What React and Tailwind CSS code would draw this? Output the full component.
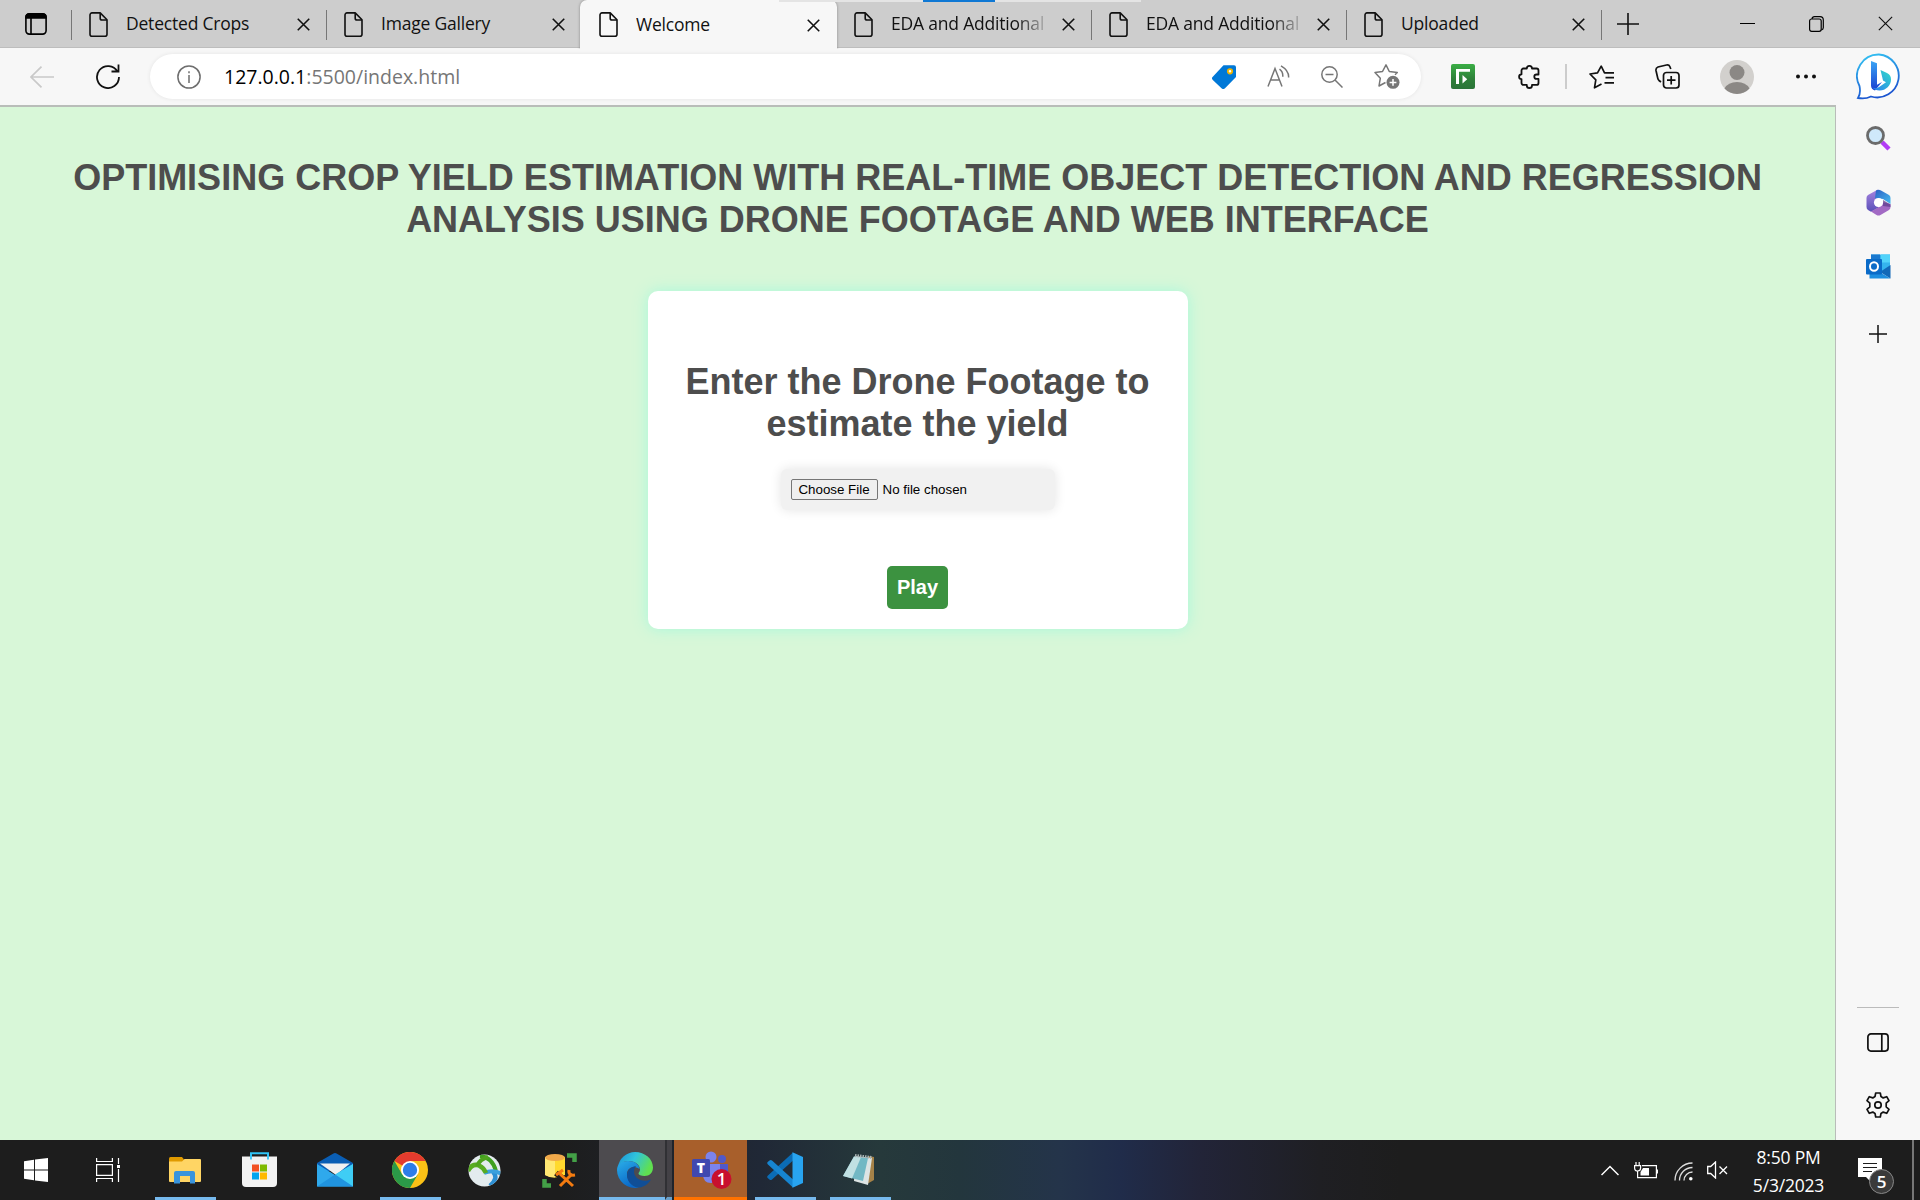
const FileIcon = () => (
  <svg className="w-[19px] h-[25px] shrink-0" viewBox="0 0 19 25" fill="none" stroke="#111" strokeWidth="1.6" strokeLinejoin="round">
    <path d="M3 .9h8.2L18 7.8v14.4a2 2 0 0 1-2 2H3a2 2 0 0 1-2-2V2.900a2 2 0 0 1 2-2z" />
    <path d="M11.200 1v5.200a1.800 1.800 0 0 0 1.800 1.800h5" />
  </svg>
);

const Cross = ({ className = "", w = 1.7 }) => (
  <svg className={className} viewBox="0 0 14 14" stroke="#111" strokeWidth={w} fill="none">
    <path d="M.8.8l12.400 12.400M13.200.8L.8 13.200" />
  </svg>
);

const Tab = ({ title, active, sep, fade }) => (
  <div className={active
    ? "relative w-[257px] -ml-px -mr-px h-[49px] bg-[#f7f7f7] rounded-t-[7px] flex items-center pl-[19px] shadow-[0_0_3px_rgba(0,0,0,.35)] [clip-path:inset(0_-4px_0_-4px)]"
    : "relative w-[255px] h-[48px] flex items-center pl-[18px]"}>
    <FileIcon />
    <span className={"ml-[18px] -mt-[2px] w-[156px] overflow-hidden whitespace-nowrap text-[17.500px] leading-[24px] tracking-[-0.2px] text-[#111] " + (fade ? "[mask-image:linear-gradient(to_right,black_125px,transparent_160px)]" : "")}>{title}</span>
    <Cross className="w-[13px] h-[13px] ml-[15px] mt-[1px]" />
    {sep && <i className="absolute right-[-1px] top-[10px] w-[1.500px] h-[30px] bg-[#777]" />}
  </div>
);

const TabBar = () => (
  <div className="relative h-[48px] bg-[#cdcdcd] flex shadow-[inset_0_-1px_0_#bdbdbd]">
    <div className="w-[71px] h-[48px] relative flex items-center pl-[25px]">
      <svg className="w-[22px] h-[22px]" viewBox="0 0 22 22" fill="none" stroke="#000" strokeWidth="1.6">
        <rect x=".9" y=".9" width="20.200" height="20.200" rx="3.500" />
        <path d="M1 3.500a2.500 2.500 0 0 1 2.500-2.500h15A2.500 2.500 0 0 1 21 3.500V5H1z" fill="#000" />
        <path d="M6 5v16" />
      </svg>
      <i className="absolute right-[-1px] top-[10px] w-[1.500px] h-[30px] bg-[#777]" />
    </div>
    <Tab title="Detected Crops" sep />
    <Tab title="Image Gallery" />
    <Tab title="Welcome" active />
    <Tab title="EDA and Additional" sep fade />
    <Tab title="EDA and Additional" sep fade />
    <Tab title="Uploaded" sep />
    <div className="flex-1 h-[47px] flex items-center pl-[16px]">
      <svg className="w-[22px] h-[22px]" viewBox="0 0 22 22" stroke="#111" strokeWidth="1.6"><path d="M11 0v22M0 11h22" /></svg>
      <i className="ml-[101px] w-[15px] h-[1.500px] bg-black" />
      <svg className="ml-[54px] w-[15px] h-[16px]" viewBox="0 0 15 16" fill="none" stroke="#000" strokeWidth="1.200">
        <rect x=".6" y="3" width="11.600" height="12.300" rx="2" />
        <path d="M3 2.800Q3.300.7 5.500.7H11q3.300 0 3.300 3.300v7.500q0 2-1.800 2.300" />
      </svg>
      <Cross className="ml-[54px] w-[15px] h-[15px]" w={1.1} />
    </div>
    <div className="absolute left-[779px] top-0 w-[362px] h-[2px] bg-[#e4e4e4]"><i className="block ml-[144px] w-[72px] h-[2px] bg-[#0f78d4]" /></div>
  </div>
);

const Bing = () => (
  <svg className="w-[46px] h-[48px]" viewBox="0 0 46 48">
    <defs>
      <linearGradient id="bo" x1="0" y1="0" x2="0.300" y2="1"><stop stopColor="#35c8f4" /><stop offset="1" stopColor="#1b55d0" /></linearGradient>
      <linearGradient id="b1" x1="0" y1="0" x2="0" y2="1"><stop stopColor="#3aa5f5" /><stop offset="1" stopColor="#1a3fd0" /></linearGradient>
      <linearGradient id="b2" x1="0" y1="1" x2="1" y2="0"><stop stopColor="#2a7cf0" /><stop offset="1" stopColor="#30dcc8" /></linearGradient>
    </defs>
    <path d="M23 1.500A21.500 21.500 0 1 1 15 43.500C11 45.500 6 45.800 2 45c2-3 2.500-7 1.500-12A21.500 21.500 0 0 1 23 1.500z" fill="#fff" stroke="url(#bo)" strokeWidth="1.800" />
    <path d="M15 8l6 2.200v21.500L26 29l-7 8.500c-2.500-.5-4-2.500-4-5z" fill="url(#b1)" />
    <path d="M24.500 17l6.500 3c3 1.500 4 3.500 4 6.500 0 6-5 11-11.500 11-3 0-5.500-1-7-3 3 1.500 5 .5 7-.8l6.500-4.500-3-1.800z" fill="url(#b2)" />
  </svg>
);

const Toolbar = () => (
  <div className="h-[57px] bg-[#f7f7f7] flex items-center">
    <svg className="ml-[30px] w-[24px] h-[22px]" viewBox="0 0 24 22" fill="none" stroke="#c9c9c9" strokeWidth="1.700"><path d="M24 11H1M11.500.7L1 11l10.500 10.300" /></svg>
    <svg className="ml-[42px] w-[24px] h-[25px]" viewBox="0 0 24 25" fill="none" stroke="#111" strokeWidth="1.800"><path d="M21.500 7.500A11 11 0 1 0 23 13M22.500.5v7h-7" /></svg>
    <div className="ml-[30px] w-[1271px] h-[45px] rounded-full bg-white flex items-center shadow-[0_0_4px_rgba(0,0,0,.08)]">
      <svg className="ml-[27px] w-[24px] h-[24px]" viewBox="0 0 24 24" fill="none" stroke="#6e6e6e" strokeWidth="1.500"><circle cx="12" cy="12" r="11.100" /><path d="M12 10v8M12 6.200v2" /></svg>
      <div className="ml-[23px] w-[988px] text-[19.500px] leading-[28px] text-[#767676] whitespace-nowrap"><span className="text-black">127.0.0.1</span>:5500/index.html</div>
      <svg className="w-[24px] h-[24px]" viewBox="0 0 24 24"><path d="M11.500.3H22a2 2 0 0 1 2 2V12L13 23.200a2.500 2.500 0 0 1-3.500 0L.8 15a2.200 2.200 0 0 1 0-3.200z" fill="#0078d7" /><circle cx="18" cy="6.300" r="2.200" fill="#fff" stroke="#f0b400" strokeWidth="1.800" /></svg>
      <svg className="ml-[31px] w-[23px] h-[23px]" viewBox="0 0 23 23" fill="none" stroke="#767676" strokeWidth="1.500"><path d="M1 21.500L8 3.500 15 21.500M3.700 15h8.600M12.500 4.200q3.600 2.500 3.300 7.500M14 .8q8 4.600 7.600 11.700" /></svg>
      <svg className="ml-[31px] w-[22px] h-[22px]" viewBox="0 0 22 22" fill="none" stroke="#767676" strokeWidth="1.500"><circle cx="8.500" cy="8.500" r="7.700" /><path d="M14 14l7.500 7.500M4.500 8.500h8" /></svg>
      <svg className="ml-[31px] w-[27px] h-[27px]" viewBox="0 0 27 27" fill="none" stroke="#767676" strokeWidth="1.500" strokeLinejoin="round"><path d="M11.500 19.500L5 23l1.300-7.700L1 9.500l7.500-1L12 1.800l3.300 6.700 8 1-2.300 2.200" /><circle cx="19" cy="19.300" r="6.500" fill="#767676" stroke="none" /><path d="M19 16v6.800M15.600 19.400h6.800" stroke="#fff" /></svg>
    </div>
    <svg className="ml-[30px] w-[24px] h-[25px]" viewBox="0 0 24 25"><defs><linearGradient id="fg" x1="0" y1="0" x2="0" y2="1"><stop stopColor="#3aae45" /><stop offset=".6" stopColor="#2e8039" /><stop offset="1" stopColor="#2b7438" /></linearGradient></defs><rect width="24" height="25" rx="2" fill="url(#fg)" /><path d="M5 5h14v2.700H8V20H5z" fill="#fff" /><path d="M11.500 11l4.700 4.200-4.700 4.300z" fill="#fff" /></svg>
    <svg className="ml-[42px] w-[24px] h-[25px]" viewBox="0 0 24 25" fill="none" stroke="#111" strokeWidth="1.800" strokeLinejoin="round"><path d="M6 4.500h3.800a2.600 2.600 0 1 1 5.200 0h4.500A2 2 0 0 1 21.500 6.500v4h-2a2.200 2.200 0 1 0 0 4.400h2v4a2 2 0 0 1-2 2H15v.5a2.600 2.600 0 1 1-5.200 0v-.5H6.500a2 2 0 0 1-2-2v-3.800a2.400 2.400 0 1 1 0-4.800V6.500a2 2 0 0 1 2-2z" /></svg>
    <i className="ml-[24px] w-[1.500px] h-[25px] bg-[#ccc]" />
    <svg className="ml-[22px] w-[26px] h-[24px]" viewBox="0 0 26 24" fill="none" stroke="#111" strokeWidth="1.700" strokeLinejoin="round"><path d="M12.500 19L5.500 22.800 6.800 14.800 1 9l7.500-1.100L12.200 1.200l3.300 6.600H25M16.500 12.700H25M15.500 17.800H25" /></svg>
    <svg className="ml-[40px] w-[25px] h-[25px]" viewBox="0 0 25 25" fill="none" stroke="#111" strokeWidth="1.700"><rect x="8.500" y="8.500" width="15.500" height="15.500" rx="3" /><path d="M16.200 12v8.500M12 16.200h8.500M6 18L4 16.500Q3 15.500 2.700 14L1 6.500Q.6 4 3 3L11.500 1q2.500-.5 3.300 1.500L15.800 5" /></svg>
    <svg className="ml-[40px] w-[34px] h-[34px]" viewBox="0 0 34 34"><circle cx="17" cy="17" r="17" fill="#d2d0cd" /><circle cx="17" cy="12.500" r="7.500" fill="#8b8885" /><path d="M4.500 28.500Q8 22 17 22t12.500 6.500A17 17 0 0 1 4.500 28.500z" fill="#8b8885" /></svg>
    <svg className="ml-[41px] w-[22px] h-[5px]" viewBox="0 0 22 5" fill="#111"><circle cx="3" cy="2.500" r="2" /><circle cx="11" cy="2.500" r="2" /><circle cx="19" cy="2.500" r="2" /></svg>
    <div className="ml-[39px]"><Bing /></div>
  </div>
);

const Sidebar = () => (
  <aside className="w-[84px] h-[1035px] bg-[#f7f7f7] flex flex-col items-center">
    <svg className="mt-[21px] w-[25px] h-[25px]" viewBox="0 0 25 25"><path d="M16 16l7 7" stroke="#b23cf5" strokeWidth="4.500" /><circle cx="9.500" cy="9.500" r="8" fill="#cfe9fb" stroke="#6b6b6b" strokeWidth="2.800" /></svg>
    <svg className="mt-[38px] w-[25px] h-[27px]" viewBox="0 0 25 27"><defs><linearGradient id="ma" x1="0" y1="0" x2="0" y2="1"><stop stopColor="#a684e0" /><stop offset="1" stopColor="#5a4fb8" /></linearGradient><linearGradient id="mb" x1="0" y1="0" x2="1" y2="1"><stop stopColor="#2b5fc4" /><stop offset="1" stopColor="#46bdf0" /></linearGradient></defs>
      <path d="M12 .5L2 6Q.5 7 .5 9v9q0 2 1.500 3l3 1.700 7.500-4V5z" fill="url(#ma)" /><path d="M10 1.500q2.500-1.500 5 0L23 6q1.500 1 1.500 3v6l-7.500-5-8-1z" fill="url(#mb)" /><path d="M24.500 15v3q0 2-1.500 3l-8.500 5q-2 1-4 0L5 22.500l8-4.500 4-5z" fill="#a26ac4" /><path d="M17 11l7.500 4.500V18L17 17z" fill="#5d3c8c" opacity=".7" /><circle cx="12.500" cy="13.500" r="4.600" fill="#fff" /></svg>
    <svg className="mt-[38px] w-[25px] h-[25px]" viewBox="0 0 25 25"><path d="M5 .5h19v17H5z" fill="#35b4ee" /><path d="M5 .5h9v8H5z" fill="#1a79cf" /><path d="M15 .5h9v8h-9z" fill="#52d3fa" /><path d="M3.500 12l21 12.500h-21z" fill="#1d8ee0" /><path d="M24.500 11v13.500L14 18z" fill="#1268b8" /><rect y="5" width="16" height="15.500" rx="1" fill="#0a6bc8" /><ellipse cx="8" cy="12.500" rx="4" ry="4.300" fill="none" stroke="#fff" strokeWidth="2" /></svg>
    <svg className="mt-[46px] w-[18px] h-[18px]" viewBox="0 0 18 18" stroke="#111" strokeWidth="1.500"><path d="M9 0v18M0 9h18" /></svg>
    <i className="mt-auto w-[42px] h-px bg-[#bbb]" />
    <svg className="mt-[25px] w-[22px] h-[19px]" viewBox="0 0 22 19" fill="none" stroke="#111" strokeWidth="1.700"><rect x=".9" y=".9" width="20.200" height="17.200" rx="3" /><path d="M14.800 1v17" /></svg>
    <svg className="mt-[40px] mb-[22px] w-[26px] h-[26px]" viewBox="0 0 26 26" fill="none" stroke="#111" strokeWidth="1.700" strokeLinejoin="round"><path d="M10.700 1h4.600l.7 3.600 2.200 1.300 3.500-1.200 2.300 4-2.800 2.400v3.800l2.800 2.400-2.300 4-3.500-1.200-2.200 1.300-.7 3.600h-4.600l-.7-3.600-2.200-1.300-3.500 1.200-2.300-4 2.800-2.400v-3.800L2 8.700l2.300-4 3.500 1.200L10 4.600z" /><circle cx="13" cy="13" r="3.200" /></svg>
  </aside>
);

const Page = () => (
  <main className="w-[1836px] h-[1035px] bg-[#d8f7d8] border-t-2 border-r border-[#b9bdb9] font-['Liberation_Sans',Arial,sans-serif] flex flex-col items-center">
    <h1 className="mt-[50px] w-[1760px] text-center text-[36px] leading-[42px] font-bold text-[#4d4d4d]">
      OPTIMISING CROP YIELD ESTIMATION WITH REAL-TIME OBJECT DETECTION AND REGRESSION<br />ANALYSIS USING DRONE FOOTAGE AND WEB INTERFACE
    </h1>
    <section className="mt-[50px] w-[540px] h-[338px] rounded-[10px] bg-white shadow-[0_0_15px_#a8f8dc] flex flex-col items-center">
      <h2 className="mt-[70px] text-center text-[36px] leading-[42px] font-bold text-[#4d4d4d]">Enter the Drone Footage to<br />estimate the yield</h2>
      <div className="mt-[24px] w-[274px] h-[41px] rounded-[6px] bg-[#f1f1f1] shadow-[0_0_12px_rgba(0,0,0,.11)] flex items-center pl-[10px] text-[13.333px] text-black">
        <button className="w-[87px] h-[21px] border border-[#767676] rounded-[2px] bg-[#efefef] leading-[18px] whitespace-nowrap">Choose File</button>
        <span className="ml-[5px]">No file chosen</span>
      </div>
      <button className="mt-[56px] w-[61px] h-[43px] rounded-[5px] bg-[#3c9240] text-white font-bold text-[20px] pb-[2px]">Play</button>
    </section>
  </main>
);

const Task = ({ className, children }) => <div className={"h-[60px] flex items-center justify-center border-b-[3px] pt-[3px] " + className}>{children}</div>;

const Taskbar = () => (
  <footer className="h-[60px] flex bg-[#1d1d1d] bg-[linear-gradient(to_right,#1d1d1d_560px,#202836_760px,#26393b_880px,#23363d_960px,#24344a_1060px,#202c4a_1120px,#222438_1200px,#1f1f23_1320px,#1d1d1d_1400px)] font-['Open_Sans','Noto_Sans',sans-serif]">
    <Task className="w-[72px] border-transparent"><svg className="w-[24px] h-[24px]" viewBox="0 0 24 24" fill="#fff"><path d="M0 3.300l10-1.500v9.700H0zM11 1.600L24 0v11.500H11zM0 12.500h10v9.700L0 20.700zM11 12.500h13V24l-13-1.600z" /></svg></Task>
    <Task className="w-[72px] border-transparent"><svg className="w-[24px] h-[24px]" viewBox="0 0 24 24" fill="none" stroke="#fff" strokeWidth="1.200"><path d="M.6 6.600h15.800v10.800H.6zM.6 0v3.500h15.800V0M.6 24v-3.500h15.800V24M22.500 0v6M22.500 11v13" /><path d="M21 7h3v3h-3z" fill="#fff" stroke="none" /></svg></Task>
    <Task className="w-[61px] ml-[11px] border-[#76b9ed]"><svg className="mr-[1px] w-[32px] h-[27px]" viewBox="0 0 32 27"><path d="M0 1.500Q0 0 1.500 0H13l2 2.500V6H0z" fill="#e09a00" /><path d="M0 4.500h13L15.500 2H31q1 0 1 1v21q0 1-1 1H1q-1 0-1-1z" fill="#ffd564" /><path d="M5 26.500V16q0-2 2-2h17q2 0 2 2v10.500h-5V19H11v7.500z" fill="#3a94dc" /></svg></Task>
    <Task className="w-[61px] ml-[13px] border-transparent"><svg className="w-[35px] h-[36px]" viewBox="0 0 35 36"><path d="M9 7V1.300h17V7" fill="none" stroke="#2fc3f5" strokeWidth="2" /><path d="M0 4.500h35V31q0 4-4 4H4q-4 0-4-4z" fill="#f2f2f2" /><path d="M9 7.500v-4M26 7.500v-4" stroke="#2fc3f5" strokeWidth="1.800" /><path d="M10 12.500h7v7h-7z" fill="#f25022" /><path d="M18 12.500h7v7h-7z" fill="#7fba00" /><path d="M10 20.500h7v7h-7z" fill="#00a4ef" /><path d="M18 20.500h7v7h-7z" fill="#ffb900" /></svg></Task>
    <Task className="w-[61px] ml-[14px] border-transparent"><svg className="w-[36px] h-[34px]" viewBox="0 0 36 34"><path d="M0 10L16 .7q2-1.200 4 0L36 10v8H0z" fill="#0a5eb4" /><path d="M3 10.500h30L19 22z" fill="#f0f0f0" /><path d="M0 11l18 11 18-11v22.500H0z" fill="#2fa9ec" /><path d="M36 11v22.500L18 21.500z" fill="#3fcdf5" /><path d="M0 33.500h36L18 21.500z" fill="#2094e0" /></svg></Task>
    <Task className="w-[61px] ml-[15px] border-[#76b9ed]"><svg className="mr-[1px] w-[36px] h-[36px]" viewBox="0 0 36 36"><circle cx="18" cy="18" r="18" fill="#fbc116" /><path d="M18 18L2.400 9A18 18 0 0 1 33.600 9H18z" fill="#e33b2e" /><path d="M2.400 9a18 18 0 0 0 15.600 27l7.800-13.500L18 27 10.200 22.500z" fill="#2b9a48" /><circle cx="18" cy="18" r="9" fill="#fff" /><circle cx="18" cy="18" r="7.200" fill="#2d7de9" /></svg></Task>
    <Task className="w-[61px] ml-[13px] border-transparent"><svg className="w-[33px] h-[33px]" viewBox="0 0 33 33"><defs><clipPath id="cc"><circle cx="16.500" cy="16.500" r="16" /></clipPath></defs><circle cx="16.500" cy="16.500" r="16" fill="#e3ebee" /><g clipPath="url(#cc)" fill="none"><path d="M12 2Q24 3 28 17" stroke="#3fa01f" strokeWidth="4" /><path d="M22 32q9-8 3-14" stroke="#2c8fd3" strokeWidth="4.500" /><path d="M16 19q9-4 18 1" stroke="#3aa0dd" strokeWidth="4" /><path d="M0 17Q4 9 11 11.500 16 14 18 19" stroke="#58ac22" strokeWidth="4.500" /><path d="M9 12Q12 5 20 3" stroke="#4fa31f" strokeWidth="4" /></g></svg></Task>
    <Task className="w-[61px] ml-[14px] border-transparent"><svg className="w-[35px] h-[35px]" viewBox="0 0 35 35"><path d="M25 2.500h7.500V9M2.500 26v6.500H9" fill="none" stroke="#43a047" strokeWidth="4.500" /><path d="M3 4h20v18q-10 5-20 0z" fill="#ffd92e" /><path d="M3 4h10v20.500q-6 0-10-2.500z" fill="#ffe873" /><ellipse cx="13" cy="4.500" rx="10" ry="3.500" fill="#f0a94a" /><path d="M14 20l17 14" stroke="#1d1d1d" strokeWidth="6" /><g stroke="#f47b10" strokeWidth="3" fill="none"><path d="M18 21l13 12M18 33l12-12M14 22l7-5" /><path d="M27 17q-1 6 6 5" /></g></svg></Task>
    <Task className="w-[66px] ml-[9px] bg-[#4d4b4f] border-[#76b9ed]"><svg className="mr-[-6px] w-[36px] h-[36px]" viewBox="0 0 36 36"><defs><linearGradient id="ea" x1="0" y1="0" x2="1" y2=".4"><stop stopColor="#1a8fd8" /><stop offset=".5" stopColor="#30c4dc" /><stop offset="1" stopColor="#60e050" /></linearGradient><linearGradient id="eb" x1="0" y1="0" x2=".5" y2="1"><stop stopColor="#2aaee8" /><stop offset="1" stopColor="#0a68c8" /></linearGradient></defs><path d="M1 15A17.500 17.500 0 0 1 18 0c10 0 18 7 18 15.500 0 5-3.500 8.500-8.500 8.500-3.500 0-6-1-6-2.500 0-1 1.500-1.500 1.500-4C23 13 18 9 12 9 6 9 2.500 12 1 15z" fill="url(#ea)" /><path d="M0 18C0 12 5 9 11 9c7 0 11 3.500 11.500 8C14 12 10 18 10 22c0 7 5 12 12 13.500A18 18 0 0 1 0 18z" fill="url(#eb)" /><path d="M19 14c-6 1-9 5-9 9 0 7 6 13 13 12.500 5-1 9-4.500 11-8-10 4-17-2-17-8 0-2 1-4 2-5.500z" fill="#104e96" /></svg></Task>
    <Task className="w-[7px] bg-[#434146] border-[#689fca] border-l-2 border-l-[#303034]" />
    <Task className="w-[73px] ml-[2px] bg-[#a85f2b] border-[#ff7200] pr-0"><svg className="ml-[2px] w-[40px] h-[38px]" viewBox="0 0 40 38"><circle cx="19" cy="6" r="5.500" fill="#7b83eb" /><circle cx="30" cy="8" r="4" fill="#5059c9" /><path d="M27 13h9v9q0 5-5 6h-4z" fill="#5059c9" /><path d="M11 13h17v10q0 9-9 9-8 0-8-9z" fill="#7b83eb" /><rect y="8" width="18" height="18" rx="1.500" fill="#4048b0" /><text x="9" y="21.500" textAnchor="middle" fill="#fff" fontSize="14" fontWeight="800">T</text><circle cx="29.500" cy="28" r="10" fill="#c8102e" /><text x="29.500" y="34" textAnchor="middle" fill="#fff" fontSize="17" fontWeight="600">1</text></svg></Task>
    <Task className="w-[61px] ml-[8px] border-[#76b9ed]"><svg className="mr-[1px] w-[36px] h-[36px]" viewBox="0 0 36 36"><path d="M26 8.500L5 27.500q-1.300 1-2.500 0L.7 26q-1-1 0-2.200L26 .5z" fill="#0b6cb5" /><path d="M26 27.500L5 8.500q-1.300-1-2.500 0L.7 10q-1 1 0 2.200L26 35.500z" fill="#1685d1" /><path d="M25.500.3L36 5v26l-10.500 4.700z" fill="#28a4f0" /></svg></Task>
    <Task className="w-[61px] ml-[14px] border-[#76b9ed]"><svg className="mr-[2px] mb-[2px] w-[33px] h-[33px]" viewBox="0 0 33 33"><path d="M25 3l6 1v23l-7 4z" fill="#a58248" /><path d="M12 3l17 2-4 27-14-4z" fill="#dce4e4" /><path d="M11 3.500L25 5l-5 23L0 23z" fill="#72b8c4" /><path d="M11 3.500l7 .8L9 25.500 0 23z" fill="#c0e0e2" /><path d="M12 2.500l17 2" stroke="#a9b3b3" strokeWidth="3" strokeDasharray="1.500 1" /></svg></Task>
    <div className="ml-auto flex items-center h-[60px] text-white">
      <svg className="w-[18px] h-[11px]" viewBox="0 0 18 11" fill="none" stroke="#fff" strokeWidth="1.500"><path d="M.5 10L9 1.500 17.500 10" /></svg>
      <svg className="ml-[15px] w-[24px] h-[17px]" viewBox="0 0 24 17" fill="none" stroke="#fff" strokeWidth="1.200"><path d="M8 3.600h14.400v12H3.600V9M.6 3.600h6V6q0 3-3 3t-3-3zM2 3.500V0M5.200 3.500V0M23.400 7.500v4" /><path d="M9 6h6v7.500H6.500V10z" fill="#fff" stroke="none" /></svg>
      <svg className="ml-[16px] mt-[3px] w-[19px] h-[19px]" viewBox="0 0 19 19" fill="none" stroke="#ddd" strokeWidth="1.300"><path d="M1 18.500A17.500 17.500 0 0 1 18.500 1M5.500 18.500a13 13 0 0 1 13-13M10 18.500a8.500 8.500 0 0 1 8.500-8.500" /><circle cx="16.800" cy="16.800" r="1.800" fill="#fff" stroke="none" /></svg>
      <svg className="ml-[14px] w-[21px] h-[18px]" viewBox="0 0 21 18" fill="none" stroke="#fff" strokeWidth="1.300"><path d="M.7 5.500h3L8.500 1v16l-4.800-4.500h-3zM12.500 5.500l7.500 7.500M20 5.500L12.500 13" /></svg>
      <div className="ml-[18px] w-[85px] text-center text-[17.500px] leading-[28px] whitespace-nowrap pt-[1px] tracking-[-0.200px]">8:50 PM<br />5/3/2023</div>
      <div className="relative ml-[22px] w-[55px] h-[60px]">
        <svg className="absolute left-[5px] top-[18px] w-[38px] h-[38px]" viewBox="0 0 38 38"><path d="M0 0h24v19H13v5l-5-5H0z" fill="#fff" /><path d="M5 5.500h14M5 9.500h14M5 13.500h9" stroke="#1d1d1d" strokeWidth="1.200" /><circle cx="23.500" cy="23.500" r="12" fill="#3a3a3a" stroke="#888" strokeWidth="1" /><text x="23.500" y="29.500" textAnchor="middle" fill="#fff" fontSize="17" fontWeight="600">5</text></svg>
      </div>
      <i className="ml-[4px] mr-[6px] w-[2px] h-[60px] bg-[#777]" />
    </div>
  </footer>
);

export default function App() {
  return (
    <div className="w-[1920px] h-[1200px] overflow-hidden flex flex-col font-['Open_Sans','Noto_Sans',sans-serif]">
      <TabBar />
      <Toolbar />
      <div className="flex h-[1035px]"><Page /><Sidebar /></div>
      <Taskbar />
    </div>
  );
}
